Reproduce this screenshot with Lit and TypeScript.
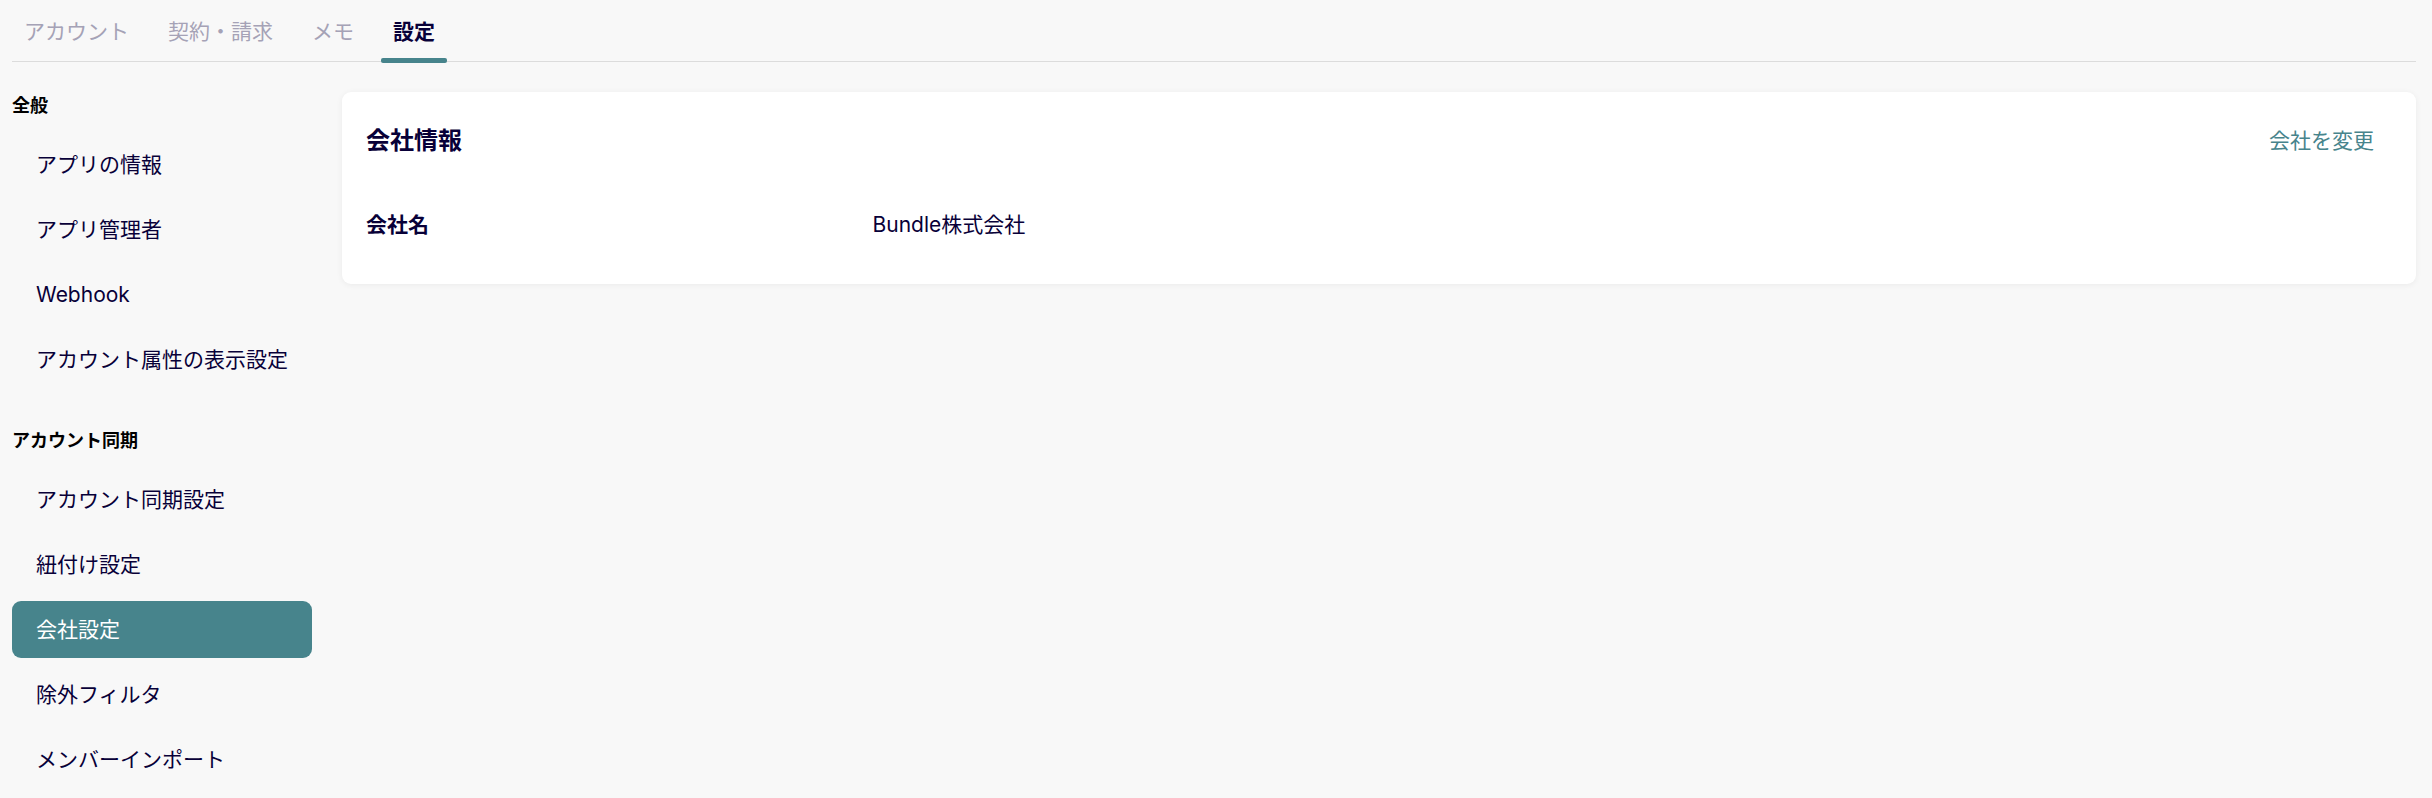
import { html, css, LitElement } from "lit"
import { customElement, property, state } from "lit/decorators.js"
import { classMap } from "lit/directives/class-map.js"

const TABS = ["アカウント", "契約・請求", "メモ", "設定"]

const SECTIONS = [
  {
    title: "全般",
    items: ["アプリの情報", "アプリ管理者", "Webhook", "アカウント属性の表示設定"],
  },
  {
    title: "アカウント同期",
    items: [
      "アカウント同期設定",
      "紐付け設定",
      "会社設定",
      "除外フィルタ",
      "メンバーインポート",
    ],
  },
]

@customElement("settings-tabs")
export class SettingsTabs extends LitElement {
  @state() active = "設定"

  static styles = css`
    :host {
      display: block;
    }
    .tabs {
      display: flex;
      gap: 15px;
      border-bottom: 1px solid #dcdcdc;
    }
    .tab {
      position: relative;
      padding: 16px 12px 13px;
      border: 0;
      background: none;
      color: #a5a2b6;
      font: inherit;
      line-height: 32px;
      white-space: nowrap;
      cursor: pointer;
    }
    .tab.active {
      color: var(--text);
      font-weight: 700;
    }
    .tab.active::after {
      content: "";
      position: absolute;
      right: 0;
      bottom: -2px;
      left: 0;
      height: 5px;
      border-radius: 2px;
      background: var(--accent);
    }
  `

  render() {
    return html`
      <div class="tabs" role="tablist">
        ${TABS.map(
          (tab) => html`<button
            class=${classMap({ tab: true, active: tab === this.active })}
            type="button"
            role="tab"
            aria-selected=${tab === this.active ? "true" : "false"}
            @click=${() => (this.active = tab)}
          >${tab}</button>`
        )}
      </div>
    `
  }
}

@customElement("settings-nav")
export class SettingsNav extends LitElement {
  @state() active = "会社設定"

  static styles = css`
    :host {
      display: block;
    }
    .nav {
      display: flex;
      flex-direction: column;
      gap: 39px;
    }
    .title {
      margin: 0 0 17px;
      color: #000;
      font-size: 18px;
      font-weight: 700;
      line-height: 27px;
    }
    .list {
      display: flex;
      flex-direction: column;
      gap: 8px;
      margin: 0;
      padding: 0;
      list-style: none;
    }
    .link {
      display: block;
      padding: 13px 24px 12px;
      border-radius: 9px;
      color: var(--text);
      line-height: 32px;
      text-decoration: none;
      white-space: nowrap;
    }
    .link.active {
      background: var(--accent);
      color: #fff;
    }
  `

  select(e: Event, item: string) {
    e.preventDefault()
    this.active = item
  }

  render() {
    return html`
      <nav class="nav">
        ${SECTIONS.map(
          (section) => html`
            <section>
              <h2 class="title">${section.title}</h2>
              <ul class="list">
                ${section.items.map(
                  (item) => html`<li>
                    <a
                      class=${classMap({ link: true, active: item === this.active })}
                      href="#"
                      @click=${(e: Event) => this.select(e, item)}
                      >${item}</a
                    >
                  </li>`
                )}
              </ul>
            </section>
          `
        )}
      </nav>
    `
  }
}

@customElement("company-card")
export class CompanyCard extends LitElement {
  @property({ type: String }) name = ""

  static styles = css`
    :host {
      display: block;
    }
    .card {
      padding: 24px 24px 43px;
      border-radius: 9px;
      background: #fff;
      box-shadow: 0 1px 6px rgba(0, 0, 0, 0.06);
    }
    .header {
      display: flex;
      align-items: center;
      justify-content: space-between;
      margin-bottom: 43px;
    }
    .title {
      margin: 0;
      font-size: 24px;
      font-weight: 700;
      line-height: 32px;
    }
    .change {
      padding: 9px 18px;
      border: 0;
      background: none;
      color: var(--accent);
      font: inherit;
      line-height: 32px;
      cursor: pointer;
    }
    .row {
      display: grid;
      grid-template-columns: 1fr 3fr;
      margin: 0;
      line-height: 32px;
    }
    .label {
      font-weight: 700;
    }
    .value {
      margin: 0;
    }
  `

  render() {
    return html`
      <section class="card">
        <div class="header">
          <h1 class="title">会社情報</h1>
          <button class="change" type="button">会社を変更</button>
        </div>
        <dl class="row">
          <dt class="label">会社名</dt>
          <dd class="value">${this.name}</dd>
        </dl>
      </section>
    `
  }
}

@customElement("app-root")
export class AppRoot extends LitElement {
  static styles = css`
    :host {
      --accent: #47848c;
      --text: #080038;
      display: block;
      box-sizing: border-box;
      min-height: 100vh;
      padding: 0 16px 8px 12px;
      background: #f8f8f8;
      color: var(--text);
      font-family: Inter, "Noto Sans CJK JP", sans-serif;
      font-size: 21px;
      font-weight: 400;
    }
    .layout {
      display: grid;
      grid-template-columns: 300px 1fr;
      align-items: start;
      gap: 30px;
      padding-top: 30px;
    }
  `

  render() {
    return html`
      <settings-tabs></settings-tabs>
      <main class="layout">
        <settings-nav></settings-nav>
        <company-card name="Bundle株式会社"></company-card>
      </main>
    `
  }
}

declare global {
  interface HTMLElementTagNameMap {
    "settings-tabs": SettingsTabs
    "settings-nav": SettingsNav
    "company-card": CompanyCard
    "app-root": AppRoot
  }
}
